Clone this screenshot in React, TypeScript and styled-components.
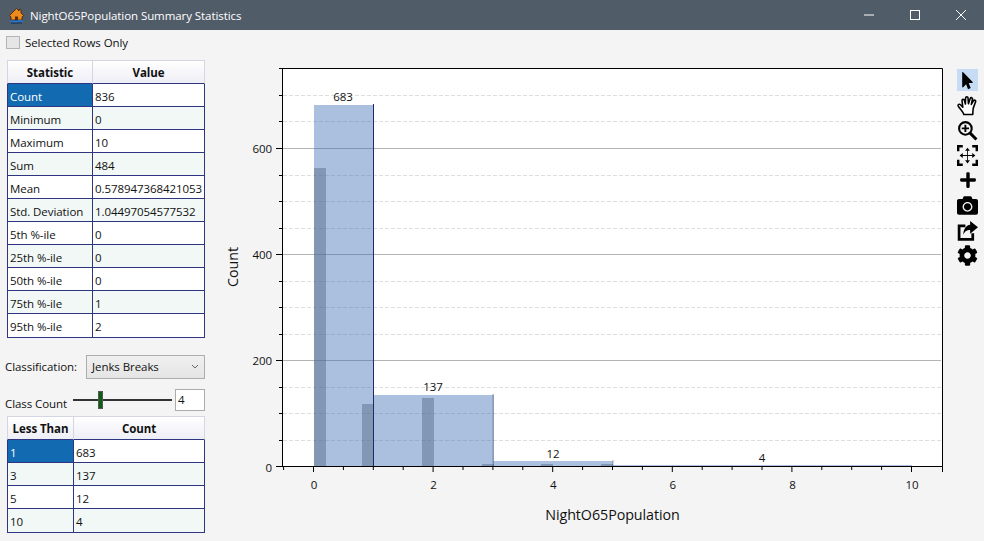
import React from 'react';
import styled, { createGlobalStyle } from 'styled-components';
import { FaCamera, FaCog, FaPlus, FaMousePointer } from 'react-icons/fa';

const stats = [
  ['Count', '836'],
  ['Minimum', '0'],
  ['Maximum', '10'],
  ['Sum', '484'],
  ['Mean', '0.578947368421053'],
  ['Std. Deviation', '1.04497054577532'],
  ['5th %-ile', '0'],
  ['25th %-ile', '0'],
  ['50th %-ile', '0'],
  ['75th %-ile', '1'],
  ['95th %-ile', '2'],
];

const classes = [
  ['1', '683'],
  ['3', '137'],
  ['5', '12'],
  ['10', '4'],
];

const xOf = (v: number) => 314 + v * 59.8;
const yOf = (c: number) => 466 - c * 0.53;

const minorY = [95, 121, 175, 201, 228, 281, 307, 334, 387, 413, 440];
const majorY = [148, 254, 360];
const bins = [
  { x: 314, w: 60, top: 105 },
  { x: 374, w: 119.5, top: 395 },
  { x: 493.5, w: 119.5, top: 461 },
  { x: 613, w: 299, top: 465 },
];
const spikes = [
  { x: 314, top: 168 },
  { x: 362, top: 404 },
  { x: 422, top: 398 },
  { x: 482, top: 464 },
  { x: 541, top: 464 },
  { x: 601, top: 464 },
];
const edges = [
  { x: 373.5, top: 104, o: 1 },
  { x: 493.2, top: 394, o: 0.55 },
  { x: 613, top: 460, o: 0.4 },
];

const DataTable = ({ head, rows, split }: { head: string[]; rows: string[][]; split: number }) => (
  <Table $split={split}>
    <HeadCell>{head[0]}</HeadCell>
    <HeadCell>{head[1]}</HeadCell>
    {rows.map((row, i) => (
      <React.Fragment key={row[0]}>
        <Cell $alt={i % 2 === 1} $selected={i === 0}>{row[0]}</Cell>
        <Cell $alt={i % 2 === 1}>{row[1]}</Cell>
      </React.Fragment>
    ))}
  </Table>
);

const Histogram = () => (
  <ChartSvg viewBox="212 30 736 511">
    <rect x="282" y="68" width="660" height="398" fill="#fff" />
    {minorY.map((y) => (
      <line key={y} x1="283" x2="941" y1={y + 0.5} y2={y + 0.5} stroke="#dedede" strokeDasharray="4 2" />
    ))}
    {majorY.map((y) => (
      <line key={y} x1="283" x2="941" y1={y + 0.5} y2={y + 0.5} stroke="#b4b4b4" />
    ))}
    {bins.map((b) => (
      <rect key={b.x} x={b.x} y={b.top} width={b.w} height={466 - b.top} fill="#3c6cb4" fillOpacity="0.43" />
    ))}
    {spikes.map((s) => (
      <rect key={s.x} x={s.x} y={s.top} width="12" height={466 - s.top} fill="#506781" fillOpacity="0.45" />
    ))}
    {edges.map((e) => (
      <line key={e.x} x1={e.x} x2={e.x} y1={e.top} y2="466" stroke="#1f2a66" strokeOpacity={e.o} />
    ))}
    <path d="M279 68.5H942.5V472M282.5 68V466M279 466.5H942" fill="none" stroke="#000" />
    {majorY.concat(466).map((y) => (
      <line key={y} x1="276" x2="282" y1={y + 0.5} y2={y + 0.5} stroke="#000" />
    ))}
    {minorY.map((y) => (
      <line key={y} x1="279" x2="282" y1={y + 0.5} y2={y + 0.5} stroke="#000" />
    ))}
    {Array.from({ length: 22 }, (_, i) => i / 2 - 0.5).map((v) => (
      <line key={v} x1={xOf(v) - 0.5} x2={xOf(v) - 0.5} y1="466" y2={v % 2 === 0 ? 472 : 470} stroke="#000" />
    ))}
    {[0, 2, 4, 6, 8, 10].map((v) => (
      <TickText key={v} x={xOf(v)} y="489" textAnchor="middle">{v}</TickText>
    ))}
    {[0, 200, 400, 600].map((c) => (
      <TickText key={c} x="272" y={yOf(c) + (c === 0 ? 6 : 5)} textAnchor="end">{c}</TickText>
    ))}
    <TickText x="343" y="101" textAnchor="middle">683</TickText>
    <TickText x="433" y="391" textAnchor="middle">137</TickText>
    <TickText x="553" y="458" textAnchor="middle">12</TickText>
    <TickText x="762" y="462" textAnchor="middle">4</TickText>
    <AxisText x="612.5" y="520" textAnchor="middle">NightO65Population</AxisText>
    <AxisText x="238" y="267" textAnchor="middle" transform="rotate(-90 238 267)">Count</AxisText>
  </ChartSvg>
);

const App = () => (
  <>
    <GlobalStyle />
    <Window>
      <TitleBar>
        <House viewBox="0 0 17 17">
          <path d="M8.500 1.500 1.500 8.500 3 10V13h11V10l1.500-1.500-2.500-2.500V2.500h-2v1.500z" fill="#ee8a1c" stroke="#3d2208" strokeWidth="0.8" />
          <rect x="7" y="9.500" width="3" height="3.500" fill="#5a2a08" />
          <path d="M2 14.500c2-1.500 4 .8 6.500 0s4-1 6.500 0" fill="none" stroke="#1f78d8" strokeWidth="1.600" />
          <path d="M3 16.300c2-.8 4 .4 5.500 0s3.500-.6 5.500 0" fill="none" stroke="#12305a" strokeWidth="1" />
        </House>
        <TitleText>NightO65Population Summary Statistics</TitleText>
        <WindowButtons>
          <svg width="12" height="2" viewBox="0 0 12 2"><path d="M1 1h10" stroke="#fff" /></svg>
          <svg width="12" height="12" viewBox="0 0 12 12"><rect x="1.500" y="1.500" width="9" height="9" fill="none" stroke="#fff" /></svg>
          <svg width="12" height="12" viewBox="0 0 12 12"><path d="M1 1l10 10M11 1 1 11" stroke="#fff" /></svg>
        </WindowButtons>
      </TitleBar>
      <Body>
        <Sidebar>
          <CheckRow>
            <CheckBox />
            Selected Rows Only
          </CheckRow>
          <DataTable head={['Statistic', 'Value']} rows={stats} split={85} />
          <ClassRow>
            <ClassLabel>Classification:</ClassLabel>
            <SelectBox>
              Jenks Breaks
              <svg width="8" height="5" viewBox="0 0 8 5"><path d="M1 1l3 3 3-3" fill="none" stroke="#666" /></svg>
            </SelectBox>
          </ClassRow>
          <CountRow>
            <CountLabel>Class Count</CountLabel>
            <SliderTrack>
              <SliderThumb />
            </SliderTrack>
            <CountInput>4</CountInput>
          </CountRow>
          <DataTable head={['Less Than', 'Count']} rows={classes} split={66} />
        </Sidebar>
        <Histogram />
        <Toolbar>
          <ToolButton $active><FaMousePointer size={17} /></ToolButton>
          <ToolButton>
            <svg width="21" height="21" viewBox="0 0 20 20">
              <path
                d="M6.500 18.500C5.500 15.500 2.500 13 1.200 10.500C.6 9 2.200 8.200 3.300 9.300L5.500 11.500L4.800 5.500C4.600 3.800 6.500 3.400 7 5L8 8.500L8.200 2.800C8.300 1.200 10.300 1.300 10.500 2.800L10.900 8.300L12.600 3.300C13.200 1.900 15 2.500 14.700 4L13.600 9L15.700 5.500C16.500 4.300 18.200 5.100 17.700 6.500L15.500 12.500C15 15 15.200 16.500 15 18.500Z"
                fill="#fff"
                stroke="#000"
                strokeWidth="1.500"
                strokeLinejoin="round"
              />
            </svg>
          </ToolButton>
          <ToolButton>
            <svg width="21" height="21" viewBox="0 0 20 20">
              <circle cx="8" cy="8" r="6" fill="none" stroke="#000" strokeWidth="2" />
              <path d="M4.500 8h7M8 4.500v7" stroke="#000" strokeWidth="1.800" />
              <path d="M12.500 12.500 18.500 18.500" stroke="#000" strokeWidth="2.800" />
            </svg>
          </ToolButton>
          <ToolButton>
            <svg width="21" height="21" viewBox="0 0 20 20">
              <path d="M0 6V0h5.500v2.300H2.300V6zM14.500 0H20v6h-2.300V2.300h-3.200zM20 14v6h-5.500v-2.300h3.200V14zM5.500 20H0v-6h2.300v3.700h3.200z" />
              <path d="M10 2.500 12.300 5.500H7.700zM10 17.500 7.700 14.500h4.600zM2.500 10 5.500 7.700v4.600zM17.500 10 14.500 12.300V7.700z" />
              <path d="M5 9.600h10v.8H5zM9.600 5h.8v10h-.8z" />
            </svg>
          </ToolButton>
          <ToolButton><FaPlus size={18} /></ToolButton>
          <ToolButton><FaCamera size={21} /></ToolButton>
          <ToolButton>
            <svg width="21" height="21" viewBox="0 0 20 20">
              <path d="M8 5.500H2V18.500H15V12.500" fill="none" stroke="#000" strokeWidth="2.600" />
              <path d="M12.500 1 20 7 12.500 13V9.500C9.500 9.500 7.500 10.500 6 14C6 9 8.500 5 12.500 4.500z" />
            </svg>
          </ToolButton>
          <ToolButton><FaCog size={21} /></ToolButton>
        </Toolbar>
      </Body>
    </Window>
  </>
);

export default App;

const GlobalStyle = createGlobalStyle`
  html, body {
    margin: 0;
    padding: 0;
  }
  body {
    font-family: "Open Sans", "Noto Sans", sans-serif;
    font-size: 11.5px;
    letter-spacing: -0.07px;
    color: #111;
  }
`;

const Window = styled.div`
  width: 984px;
  height: 541px;
  background: #f4f4f4;
  display: flex;
  flex-direction: column;
  overflow: hidden;
`;

const TitleBar = styled.div`
  height: 30px;
  flex: none;
  background: #515c69;
  display: flex;
  align-items: center;
  padding-left: 8px;
`;

const House = styled.svg`
  width: 17px;
  height: 17px;
`;

const TitleText = styled.div`
  margin-left: 5px;
  color: #fff;
`;

const WindowButtons = styled.div`
  margin-left: auto;
  width: 138px;
  display: grid;
  grid-template-columns: repeat(3, 46px);
  justify-items: center;
  align-items: center;
`;

const Body = styled.div`
  flex: 1;
  display: flex;
  min-height: 0;
`;

const Sidebar = styled.div`
  width: 212px;
  flex: none;
  display: flex;
  flex-direction: column;
  padding: 6px 7px 0;
  box-sizing: border-box;
`;

const CheckRow = styled.div`
  display: flex;
  align-items: center;
  gap: 5px;
  height: 13px;
  margin-left: -1px;
  margin-bottom: 11px;
`;

const CheckBox = styled.div`
  width: 12px;
  height: 11px;
  background: #e6e6e6;
  border: 1px solid #b4b4b4;
`;

const Table = styled.div<{ $split: number }>`
  width: 198px;
  display: grid;
  grid-template-columns: ${(p) => p.$split}px minmax(0, 1fr);
  border: 1px solid #2f3580;
  border-top: none;
  box-sizing: border-box;
`;

const HeadCell = styled.div`
  height: 24px;
  box-sizing: border-box;
  display: flex;
  align-items: center;
  justify-content: center;
  padding-top: 1px;
  font-weight: 700;
  background: linear-gradient(#fff, #eeeef6);
  border-top: 1px solid #d5d5e4;
  border-bottom: 1px solid #2f3580;
  margin-left: -1px;
  border-left: 1px solid #d5d5e4;
  border-right: 1px solid #d5d5e4;
  &:nth-of-type(2) {
    margin-left: 0;
    border-left: none;
    margin-right: -1px;
  }
`;

const Cell = styled.div<{ $alt?: boolean; $selected?: boolean }>`
  height: 23px;
  box-sizing: border-box;
  display: flex;
  align-items: center;
  padding: 2px 0 0 2px;
  white-space: nowrap;
  overflow: hidden;
  border-bottom: 1px solid #2f3580;
  border-right: 1px solid #2f3580;
  color: ${(p) => (p.$selected ? '#fff' : '#111')};
  background: ${(p) => (p.$selected ? '#126bb0' : p.$alt ? '#f2f8f6' : '#fff')};
  &:nth-of-type(2n) {
    border-right: none;
  }
  &:nth-last-of-type(-n + 2) {
    border-bottom: none;
  }
`;

const ClassRow = styled.div`
  display: flex;
  align-items: center;
  justify-content: space-between;
  margin-top: 17px;
  margin-left: -2px;
  height: 24px;
`;

const ClassLabel = styled.div`
  padding-bottom: 2px;
`;

const SelectBox = styled.div`
  width: 119px;
  height: 24px;
  box-sizing: border-box;
  border: 1px solid #adadad;
  background: linear-gradient(#f0f0f0, #e5e5e5);
  display: flex;
  align-items: center;
  justify-content: space-between;
  padding: 0 5px 2px;
`;

const CountRow = styled.div`
  display: flex;
  align-items: center;
  height: 22px;
  margin-top: 10px;
  margin-bottom: 5px;
  margin-left: -2px;
`;

const CountLabel = styled.div`
  width: 68px;
  padding-top: 7px;
`;

const SliderTrack = styled.div`
  position: relative;
  width: 99px;
  height: 2px;
  background: #333;
`;

const SliderThumb = styled.div`
  position: absolute;
  left: 25px;
  top: -8px;
  width: 5px;
  height: 18px;
  box-sizing: border-box;
  background: #0d5d12;
  border: 1px solid #555;
`;

const CountInput = styled.div`
  width: 30px;
  height: 22px;
  margin-left: 3px;
  box-sizing: border-box;
  background: #fff;
  border: 1px solid #ababab;
  padding-left: 2px;
  line-height: 20px;
`;

const ChartSvg = styled.svg`
  width: 736px;
  height: 511px;
  flex: none;
`;

const TickText = styled.text`
  font-size: 11.5px;
  fill: #111;
`;

const AxisText = styled.text`
  font-size: 14.3px;
  fill: #111;
`;

const Toolbar = styled.div`
  flex: 1;
  display: flex;
  flex-direction: column;
  align-items: center;
  padding-top: 39px;
  padding-left: 3px;
`;

const ToolButton = styled.div<{ $active?: boolean }>`
  width: 21px;
  height: 22px;
  margin-bottom: 3px;
  display: flex;
  align-items: center;
  justify-content: center;
  color: #000;
  background: ${(p) => (p.$active ? '#c6dcf5' : 'transparent')};
`;
